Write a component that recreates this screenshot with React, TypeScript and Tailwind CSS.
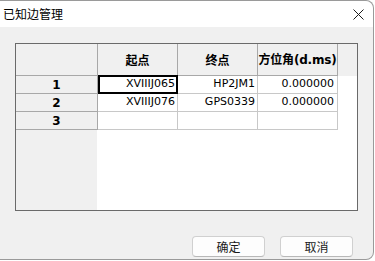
import React from "react";

const cjk = { fontFamily: '"Noto Sans CJK SC", sans-serif' };
const data = { fontFamily: '"DejaVu Sans", "Noto Sans CJK SC", sans-serif' };

export default function App() {
  const rows = [
    ["1", "XVIIIJ065", "HP2JM1", "0.000000"],
    ["2", "XVIIIJ076", "GPS0339", "0.000000"],
    ["3", "", "", ""],
  ];
  return (
    <div className="w-[375px] h-[261px] bg-white overflow-hidden">
      <div className="w-[374px] h-[260px] border-t border-r border-b border-[#9a9a9a] rounded-tr-[8px] rounded-br-[8px] bg-[#f0f0f0] flex flex-col overflow-hidden">
        {/* title bar */}
        <div className="h-[26px] bg-white flex items-center justify-between pl-[3px] pr-[8px] rounded-tr-[8px]">
          <span className="text-[12px] text-black leading-none" style={cjk}>
            已知边管理
          </span>
          <svg width="11" height="11" viewBox="0 0 11 11" className="mr-[1px]">
            <path d="M0.5 0.5 L10.5 10.5 M10.5 0.5 L0.5 10.5" stroke="#1a1a1a" strokeWidth="1" />
          </svg>
        </div>
        {/* body */}
        <div className="flex-1 flex flex-col">
          <div className="ml-[15px] mt-[16px] w-[343px] h-[168px] border border-[#6a6a6a] bg-white flex flex-col">
            {/* header */}
            <div className="flex h-[32px] bg-[#f0f0f0] text-[12px] font-bold text-black" style={data}>
              <div className="w-[82px] border-r border-b border-[#a8a8a8]" />
              <div className="w-[80px] border-r border-b border-[#a8a8a8] flex items-center justify-center" style={cjk}>
                起点
              </div>
              <div className="w-[80px] border-r border-b border-[#a8a8a8] flex items-center justify-center" style={cjk}>
                终点
              </div>
              <div className="w-[80px] border-r border-b border-[#a8a8a8] flex items-center justify-center whitespace-nowrap tracking-[-0.2px]">
                方位角(d.ms)
              </div>
              <div className="flex-1" />
            </div>
            {rows.map((r, i) => (
              <div key={i} className="flex h-[18px] text-[11px] text-black" style={data}>
                <div className="w-[82px] bg-[#f0f0f0] border-r border-b border-[#a8a8a8] flex items-center justify-center font-bold text-[12px]">
                  {r[0]}
                </div>
                <div
                  className={
                    i === 0
                      ? "w-[80px] border-2 border-black -mt-[1px] h-[19px] flex items-center justify-end pr-[1px]"
                      : "w-[80px] border-r border-b border-[#c8c8c8] flex items-center justify-end pr-[2px]"
                  }
                >
                  {r[1]}
                </div>
                <div className="w-[80px] border-r border-b border-[#c8c8c8] flex items-center justify-end pr-[2px]">
                  {r[2]}
                </div>
                <div className="w-[80px] border-r border-b border-[#c8c8c8] flex items-center justify-end pr-[3px]">
                  {r[3]}
                </div>
                <div className="flex-1" />
              </div>
            ))}
            <div className="flex-1 flex">
              <div className="w-[81px] bg-[#f0f0f0]" />
              <div className="flex-1 bg-white" />
            </div>
          </div>
          {/* buttons */}
          <div className="mt-[25px] flex justify-end gap-[15px] pr-[20px]">
            <button className="w-[73px] h-[21px] bg-[#fdfdfd] border border-[#d0d0d0] border-b-[#b8b8b8] rounded-[4px] text-[12px] text-[#1a1a1a] flex items-center justify-center leading-none" style={cjk}>
              确定
            </button>
            <button className="w-[73px] h-[21px] bg-[#fdfdfd] border border-[#d0d0d0] border-b-[#b8b8b8] rounded-[4px] text-[12px] text-[#1a1a1a] flex items-center justify-center leading-none" style={cjk}>
              取消
            </button>
          </div>
        </div>
      </div>
    </div>
  );
}
